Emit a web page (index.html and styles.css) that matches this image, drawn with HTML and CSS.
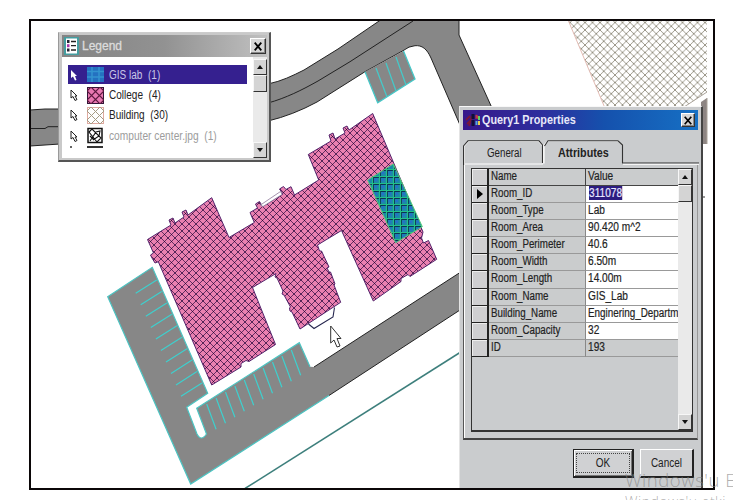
FILE: index.html
```html
<!DOCTYPE html>
<html lang="en">
<head>
<meta charset="utf-8">
<title>Campus map</title>
<link rel="stylesheet" href="styles.css">
</head>
<body>
<main class="frame">
<svg class="map" viewBox="31 21 682 467" width="682" height="467">
  <defs>
    <pattern id="college" width="7" height="7" patternUnits="userSpaceOnUse"><rect width="7" height="7" fill="#ea80b0"/><path d="M-1-1L8 8M-1 8L8-1" stroke="#43184e" stroke-width=".8"/><path d="M3 3h1v1h-1zM0 0h.5v.5h-.5zM6.500 0h.5v.5h-.5zM0 6.500h.5v.5h-.5zM6.500 6.500h.5v.5h-.5z" fill="#2a0c38"/></pattern>
    <pattern id="building" width="7.5" height="7.5" patternUnits="userSpaceOnUse"><path d="M-1-1L8.5 8.5M-1 8.5L8.5-1" stroke="#837e6c" stroke-width=".8"/></pattern>
    <pattern id="lab" width="7" height="7" patternUnits="userSpaceOnUse"><rect width="7" height="7" fill="#1c88a8"/><rect x="3.500" y="3.500" width="2.500" height="2.500" fill="#2470c8"/><path d="M0 2.500H7M2.500 0V7" stroke="#0b3454" stroke-width="1"/><path d="M0 1.500H7M1.500 0V7" stroke="#22c088" stroke-width="1.200"/></pattern>
  </defs>
  <g fill="#878787" stroke="#222" stroke-width="1">
    <path d="M30 110L45 109H60V144L30 146Z"/>
    <path d="M30 128.5H45L48 126.7H60" fill="none"/>
    <path d="M268 84C282 81 292 76 304 70L338 49L382 19H459V35L492 108L460 125L431 58C427 49 422 45 415 45.7Q409 46 403 50.7L365 71.7L317 102Q293 115 268 121Z"/>
    <path d="M268 103C286 98 302 90 318 81L350 61.7L413 21" fill="none"/>
  </g>
  <g fill="#878787" stroke="#46c8c8" stroke-width="1.3">
    <path d="M365 71.7L377.7 102.7L415 79L403.5 51"/>
    <path d="M376 68L387 97M386 63L396 91M396 57L406 85"/>
  </g>
  <path d="M107.7 296.7L152.3 267.3L207.7 393.3L186.7 407.3L197 434Q201 442 206.5 434L196.7 408.3L299.3 342.7L310 366.7L314 367L460 272.5V310L329 395.5L190.7 484Z" fill="#878787"/>
  <path d="M314 367L460 272.5M329 395.5L460 310" stroke="#222" fill="none"/>
  <path d="M329 395.5L190.7 484L107.7 296.7L152.3 267.3L207.7 393.3L186.7 407.3L197 434Q201 442 206.5 434L196.7 408.3L299.3 342.7L310 366.7" stroke="#4cc4c2" stroke-width="1.2" fill="none"/>
  <path d="M156.7 280l-21 13.3M161.7 291.4l-21 13.3M166.8 302.9l-21 13.3M171.8 314.3l-21 13.3M176.9 325.8l-21 13.3M181.9 337.2l-21 13.3M187 348.7l-21 13.3M192 360.1l-21 13.3M197 371.6l-21 13.3M202 383l-21 13.3" stroke="#3ed0ce" stroke-width="1.2"/>
  <path d="M206.7 404l9.4 25.3M216.1 398l9.4 25.3M225.5 392l9.4 25.3M234.9 386l9.4 25.3M244.3 380l9.4 25.3M253.7 374l9.4 25.3M263.1 368l9.4 25.3M272.5 362l9.4 25.3M281.9 356l9.4 25.3M291.3 350l9.4 25.3" stroke="#3ed0ce" stroke-width="1.2"/>
  <path d="M245 488.5L460 352.5" stroke="#3d7f7c" stroke-width="1.5"/>
  <path d="M568.5 21H707V92L684 107H604.5Z" fill="url(#building)"/>
  <path d="M568.5 21L604.5 107" stroke="#e3bcb4"/>
  <path d="M701 102L707 98V144H701Z" fill="#8d8583"/>
  <path d="M684 107L707 92M707 98V144" stroke="#aaa39a" fill="none"/>
  <path d="M702 197h3" stroke="#333"/>
  <path class="campus" fill="url(#college)" stroke="#54246c" stroke-width="1" d="M147.5 239.5L171 225l-2-5 4-2 2 5L184 217l-2-5 4-2 2 5L211.7 197.7L229 237.5L254.3 222.5L250 212.5L257.5 208L255.5 204l4-2.5 3 5L283 194l-3.500-5 4-2.500 2.500 3L291 186.700L294.500 195L318.700 180L308.300 154.500L331 141l-2-6 4-2 2 6L345 133l-2-5 4-2 2 4L372.700 113.500L423 232l-1.500 6 2 5 5-2.500L436.700 259.300L410 276.500l-2-2-7 4 0 3L373.300 301L341.500 230.500L317.500 245l2 6 2 0L329 267l-2 1 2 4 1.500 0L335 284l-1 1L340.700 302.300L300 329L292 312l-2-1-0.500-3 1-1L284 295l-2-1 1-3L277 278l-2-1 1-3.500L252.500 287.500L275.500 344.500L249 361.500l-3-1-5 3 0 3.500L211.700 385L158.300 261.700L155 263L152 258l-1.500-3 3-2Z"/>
  <path d="M260.500 205L280.500 191.500L282 194.500L263 206.500Z" fill="#fff" stroke="#8e789b" stroke-width=".8"/>
  <path d="M308.500 324L314 328.500L333 317L334.500 307.500" fill="none" stroke="#26264e" stroke-width="1.100"/>
  <path d="M367.700 180L393.300 164L422.300 226.700L395.700 242.700Z" fill="url(#lab)" stroke="#58c878" stroke-width="1"/>
  <path d="M330.700 326V343L334 340L337 347L340 346L337 338.500H341Z" fill="#fff" stroke="#333"/>
</svg>
</main>

<section class="window legend">
  <header class="legend-title">
    <svg width="15" height="18" viewBox="0 0 15 18"><rect width="15" height="18" fill="#459da0"/><rect x="2" y="1.500" width="11" height="15" fill="#fff"/><path d="M3 4.500h2.500M3 13h2.500" stroke="#223" stroke-width="3"/><path d="M3 8.700h2.500" stroke="#a3a" stroke-width="3"/><path d="M7 4.500h5M7 8.700h5M7 13h5" stroke="#222" stroke-width="1.300"/></svg>
    <h2>Legend</h2>
    <button class="close"><svg width="8" height="9" viewBox="0 0 8 9"><path d="M.7.7L7.300 8.300M7.300.7L.7 8.300" stroke="#000" stroke-width="1.800"/></svg></button>
  </header>
  <div class="legend-body">
    <ul class="layers">
      <li class="selected"><svg class="pointer" viewBox="0 0 8 12"><path d="M1 1V9L3 7.500 5 11.500 6.500 11 5 7H7Z" fill="#fff"/></svg><svg class="swatch" viewBox="0 0 17 17"><rect y="1" width="17" height="15" fill="#2471c0"/><path d="M0 5.500H17M0 11H17M5 1V16M12 1V16" stroke="#3393cf" stroke-width="1.500"/></svg><span class="t">GIS lab&nbsp; (1)</span></li>
      <li><svg class="pointer" viewBox="0 0 8 12"><path d="M1 1V9L3 7.500 5 11.500 7 10.500 5 7H7Z" fill="#fff" stroke="#222"/></svg><svg class="swatch" viewBox="0 0 17 17"><rect x=".5" y=".5" width="16" height="16" fill="#e978b2" stroke="#321638"/><path d="M0 4L4 0 17 13 13 17 0 4M4 17L0 13 13 0 17 4 4 17" fill="none" stroke="#5b173e" stroke-width="1.100"/></svg><span class="t">College&nbsp; (4)</span></li>
      <li><svg class="pointer" viewBox="0 0 8 12"><path d="M1 1V9L3 7.500 5 11.500 7 10.500 5 7H7Z" fill="#fff" stroke="#222"/></svg><svg class="swatch" viewBox="0 0 17 17"><rect x=".5" y=".5" width="16" height="16" fill="#fff" stroke="#dfaaa0"/><path d="M0 4L4 0 17 13 13 17 0 4M4 17L0 13 13 0 17 4 4 17" fill="none" stroke="#a59b84"/></svg><span class="t">Building&nbsp; (30)</span></li>
      <li class="muted"><svg class="pointer" viewBox="0 0 8 12"><path d="M1 1V9L3 7.500 5 11.500 7 10.500 5 7H7Z" fill="#fff" stroke="#222"/></svg><svg class="swatch" viewBox="0 0 17 17"><rect x="1" y="1.500" width="14" height="14" fill="#fff" stroke="#111" stroke-width="1.500"/><path d="M2 5L5 2 14 11 10 15ZM3 14L9 5 13 4 12 9 6 13M3 9L7 13" fill="none" stroke="#111" stroke-width="1.100"/></svg><span class="t">computer center.jpg&nbsp; (1)</span></li>
      <li class="cut"><i class="dot"></i><i class="bar"></i></li>
    </ul>
    <div class="scroll">
      <span class="cap"><i class="up"></i></span><span class="thumb"></span><span class="cap last"><i class="down"></i></span>
    </div>
  </div>
</section>

<section class="window query">
  <header class="query-title">
    <svg width="16" height="16" viewBox="0 0 16 16"><path d="M1 8L5 4M2 12L6 8M4 14L7 4" stroke="#7b1838" stroke-width="1.800"/><path d="M8 2V7M8 8V14" stroke="#101038" stroke-width="3"/><path d="M10.500 3Q12 2 13 4V7Q12 6 10.500 7Z" fill="#c33b42"/><path d="M13 4h2v4h-2z" fill="#5bcf65"/><path d="M10.500 9h2v4h-2z" fill="#53a7dd"/><path d="M13 9h2v4h-2z" fill="#e7cf4e"/></svg>
    <h2>Query1 Properties</h2>
    <button class="close"><svg width="8" height="9" viewBox="0 0 8 9"><path d="M.7.7L7.300 8.300M7.300.7L.7 8.300" stroke="#000" stroke-width="1.700"/></svg></button>
  </header>
  <nav class="tabs">
    <svg class="tabshape" viewBox="0 0 237 25" width="237" height="25"><path d="M1 25V6L5 1.500H76L80 6V23.500M81 23.500V5L85 1H156" fill="none" stroke="#fff" stroke-width="1.200"/><path d="M.5 25V6L5 .8H76L79.500 5V23M81.500 6L85 .8H155L159.500 5V23H236" fill="none" stroke="#333" stroke-width="1.100"/><path d="M2 24H80M160 24.300H236" stroke="#fff"/></svg>
    <span class="tab"><b class="t">General</b></span><span class="tab active"><b class="t">Attributes</b></span>
  </nav>
  <div class="panel">
    <div class="grid">
      <div class="rows">
        <div class="row head"><i></i><span><b class="t">Name</b></span><span><b class="t">Value</b></span></div>
        <div class="row"><i class="current"></i><span><b class="t">Room_ID</b></span><span><b class="t mark">311078</b></span></div>
        <div class="row"><i></i><span><b class="t">Room_Type</b></span><span><b class="t">Lab</b></span></div>
        <div class="row"><i></i><span><b class="t">Room_Area</b></span><span><b class="t">90.420 m^2</b></span></div>
        <div class="row"><i></i><span><b class="t">Room_Perimeter</b></span><span><b class="t">40.6</b></span></div>
        <div class="row"><i></i><span><b class="t">Room_Width</b></span><span><b class="t">6.50m</b></span></div>
        <div class="row"><i></i><span><b class="t">Room_Length</b></span><span><b class="t">14.00m</b></span></div>
        <div class="row"><i></i><span><b class="t">Room_Name</b></span><span><b class="t">GIS_Lab</b></span></div>
        <div class="row"><i></i><span><b class="t">Building_Name</b></span><span><b class="t long">Enginering_Departme</b></span></div>
        <div class="row"><i></i><span><b class="t">Room_Capacity</b></span><span><b class="t">32</b></span></div>
        <div class="row locked"><i></i><span><b class="t">ID</b></span><span><b class="t">193</b></span></div>
      </div>
      <div class="scroll">
        <span class="cap"><i class="up"></i></span><span class="thumb"></span><span class="cap last"><i class="down"></i></span>
      </div>
    </div>
  </div>
  <footer class="actions">
    <button class="push default"><span><b class="t">OK</b></span></button>
    <button class="push"><b class="t">Cancel</b></button>
  </footer>
</section>

<aside class="notice"><p class="notice-title">Windows'u E</p><p class="notice-text">Windows'u etki</p></aside>
</body>
</html>
```
FILE: styles.css
```css
* { box-sizing: border-box; }
body { margin: 0; width: 733px; height: 500px; overflow: hidden; position: relative; background: #fff; font-family: "Liberation Sans", Arial, sans-serif; color: #222; }
h2, p, ul { margin: 0; padding: 0; list-style: none; font-weight: normal; }
button { font: inherit; color: inherit; padding: 0; border: 0; }
svg { display: block; flex: none; }
b { font-weight: normal; }
.frame { margin: 19px 0 0 29px; width: 686px; height: 471px; border: 2px solid #0b0708; overflow: hidden; }
.t { display: inline-block; transform-origin: 0 50%; white-space: nowrap; }

.window { position: absolute; background: #cbcdcf; }
.close { display: flex; align-items: center; justify-content: center; flex: none; background: #d6d6d6; border: 1px solid; border-color: #fff #333 #333 #fff; box-shadow: inset -1px -1px #888; }

.legend { left: 58px; top: 32px; width: 213px; height: 130px; display: flex; flex-direction: column; padding: 2px 2px 2px 3px; background: #c9c9c9; border: solid #555; border-width: 1px 2px 2px 1px; border-top-color: #ccc; border-left-color: #999; }
.legend-title { display: flex; align-items: center; height: 22px; padding: 0 1px; background: linear-gradient(90deg, #848484, #929292 50%, #c0c0c0); color: #dcdcdc; }
.legend-title svg { margin-left: 1px; }
.legend-title h2 { flex: 1; margin-left: 3px; font-size: 12px; -webkit-text-stroke: .3px #dcdcdc; }
.legend-title .close { width: 16px; height: 16px; }
.legend-title .close svg { margin: 0; }
.legend-body { flex: 1; display: flex; background: #fff; min-height: 0; }
.layers { flex: 1; padding: 8px 6px 0 6px; font-size: 12px; }
.layers li { display: flex; align-items: center; height: 20.300px; width: 179px; }
.layers li.selected { height: 19px; background: #35208f; color: #c9c6e6; margin-bottom: 1px; }
.layers .t { transform: scaleX(.835); margin-left: 5px; }
.layers .muted .t { color: #9c9c9c; transform: scaleX(.85); }
.pointer { width: 8px; height: 12px; margin-left: 2px; }
.swatch { width: 17px; height: 17px; margin-left: 9px; }
.layers li.cut { height: 3px; }
.dot { width: 2px; height: 2px; background: #666; margin-left: 2px; }
.bar { width: 16px; height: 2px; background: #333; margin-left: 15px; }

.scroll { display: flex; flex-direction: column; width: 14px; flex: none; background: #eaeaea; }
.cap, .thumb { display: flex; align-items: center; justify-content: center; flex: none; background: #d4d4d4; border: 1px solid; border-color: #f7f7f7 #333 #333 #f7f7f7; height: 16px; }
.thumb { height: 17px; }
.last { margin-top: auto; }
.up, .down { border: solid transparent; border-width: 0 3.500px; border-bottom: 4px solid #111; }
.down { border-bottom: 0; border-top: 4px solid #111; }
.legend .scroll { padding-top: 2px; }

.query { left: 459px; top: 106px; width: 244px; height: 382px; padding: 4px 3px 0 3px; border: solid; border-width: 1px 2px 0 1px; border-color: #f8f8f8 #444 #444 #e4e4e4; display: flex; flex-direction: column; background: #caccce; }
.query-title { height: 20px; flex: none; display: flex; align-items: center; margin-top: -1px; padding: 0 3px 0 2px; background: linear-gradient(90deg, #37188a, #2d2f9e 35%, #1551ad 60%, #1670c4); color: #e8e8f8; }
.query-title h2 { flex: 1; font-size: 12.500px; font-weight: bold; transform: scaleX(.865); transform-origin: 0 50%; margin-left: 1px; }
.query-title .close { width: 14px; height: 14px; }
.tabs { margin-top: 10px; height: 25px; flex: none; display: flex; position: relative; }
.tabshape { position: absolute; left: 0; top: 0; }
.tab { position: relative; width: 81px; padding: 6px 0 0 24px; font-size: 12.500px; line-height: 14px; }
.tab .t { transform: scaleX(.78); }
.tab.active { padding-left: 14px; }
.tab.active .t { font-weight: bold; transform: scaleX(.86); }
.panel { height: 275px; flex: none; padding: 3px 4px 0 7px; border-left: 1px solid #555; border-right: 1px solid #999; border-bottom: 2px solid #444; box-shadow: inset 1px 0 #fff; }
.grid { display: flex; height: 264px; border: 1px solid #333; border-bottom-width: 2px; }
.rows { flex: 1; min-width: 0; }
.row { display: grid; grid-template-columns: 17px 97px 1fr; height: 17.080px; font-size: 12.500px; line-height: 15px; }
.row i { background: #cfcfd1; border: solid #222; border-width: 0 2px 1px 0; box-shadow: inset 1px 1px #eee; }
.row span { border-bottom: 1px solid #999; border-right: 1px solid #888; padding-left: 2px; overflow: hidden; background: #cacccd; }
.row span:last-child { background: #fff; border-right: 0; }
.row.head span { border-bottom-color: #444; border-right-color: #444; background: #cacccd; }
.row.locked span { background: #cacccd; }
.row .t { transform: scaleX(.78); -webkit-text-stroke: .2px; }
.row span:last-child .t { transform: scaleX(.81); }
.row span:last-child .long { transform: scaleX(.79); }
.row .mark { background: #2d1d80; color: #e8e8ff; line-height: 14px; margin-left: 1px; }
.row i.current { display: flex; align-items: center; justify-content: center; }
.current::before { content: ""; border: solid transparent; border-width: 5px 0 5px 6px; border-left-color: #000; }
.query .cap { height: 16px; }
.actions { display: flex; justify-content: flex-end; gap: 6px; padding: 9px 4px 0 0; }
.push { width: 54px; height: 29px; display: flex; align-items: center; justify-content: center; font-size: 12.500px; background: #d0d1d3; border: solid; border-width: 1px 2px 2px 1px; border-color: #fff #222 #222 #fff; }
.push .t { transform: scaleX(.8); transform-origin: 50% 50%; }
.push.default { width: 61px; border-color: #222; padding: 2px; box-shadow: inset 1px 1px #fff, inset -1px -1px #777; }
.default span { flex: 1; height: 20px; border: 1px dotted #444; line-height: 18px; }

.notice { position: absolute; left: 625px; top: 469px; width: 108px; height: 31px; overflow: hidden; white-space: nowrap; font-family: "Open Sans", sans-serif; color: rgba(130, 130, 130, .65); }
.notice-title { font-size: 18.500px; line-height: 22px; font-weight: 300; letter-spacing: .55px; }
.notice-text { font-size: 14px; line-height: 20px; margin-top: 1px; font-weight: 300; letter-spacing: .5px; }
```
